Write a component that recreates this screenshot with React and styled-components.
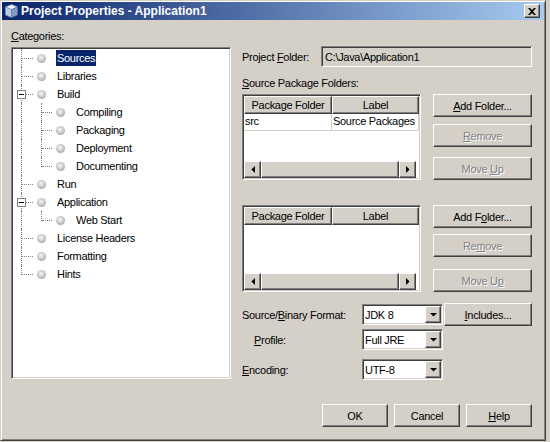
import React from 'react';
import styled, { createGlobalStyle, css } from 'styled-components';

const GlobalStyle = createGlobalStyle`
  html, body { margin: 0; padding: 0; background: #d4d0c8; }
  body {
    font-family: "Liberation Sans", Arial, sans-serif;
    font-size: 11px;
    letter-spacing: -0.3px;
    color: #000;
  }
  button { font-family: inherit; font-size: 11px; letter-spacing: inherit; }
`;

const raised = css`
  background: #d4d0c8;
  border: 1px solid;
  border-color: #fff #404040 #404040 #fff;
  box-shadow: inset -1px -1px #808080, inset 1px 1px #d4d0c8;
`;

const sunken = css`
  border: 1px solid;
  border-color: #808080 #fff #fff #808080;
  box-shadow: inset 1px 1px #404040, inset -1px -1px #d4d0c8;
  padding: 1px;
`;

const Dialog = styled.div`
  width: 546px;
  height: 441px;
  box-sizing: border-box;
  background: #d4d0c8;
  border: 1px solid;
  border-color: #d4d0c8 #404040 #404040 #d4d0c8;
  box-shadow: inset 1px 1px #fff, inset -1px -1px #808080;
  padding: 1px;
  display: flex;
  flex-direction: column;
`;

const Caption = styled.div`
  height: 18px;
  flex: none;
  display: flex;
  align-items: center;
  padding: 0 4px 0 3px;
  background: linear-gradient(to right, #0a246a, #a6caf0);
  color: #fff;
  font-weight: bold;
  font-size: 12px;
  letter-spacing: 0;
`;

const CaptionIcon = styled.svg`
  flex: none;
  margin-right: 3px;
`;

const CaptionTitle = styled.span`
  flex: 1;
  white-space: nowrap;
`;

const CloseButton = styled.span`
  ${raised};
  box-sizing: border-box;
  width: 16px;
  height: 14px;
  display: flex;
  align-items: center;
  justify-content: center;
`;

const Main = styled.div`
  display: grid;
  grid-template-columns: 220px 290px;
  column-gap: 11px;
  padding: 9px 0 0 9px;
`;

const LeftColumn = styled.div`
  display: flex;
  flex-direction: column;
`;

const RightColumn = styled.div`
  display: flex;
  flex-direction: column;
`;

const SectionLabel = styled.div`
  height: 14px;
  line-height: 14px;
  margin-top: ${p => p.$mt || 0}px;
  margin-bottom: 4px;
  white-space: nowrap;
`;

const Mn = styled.span`
  text-decoration: underline;
  text-underline-offset: 1px;
`;

const TreeBox = styled.div`
  ${sunken};
  box-sizing: border-box;
  height: 332px;
  background: #fff;
`;

const TreeRow = styled.div`
  display: flex;
  align-items: center;
  height: 18px;
`;

const Guide = styled.span`
  position: relative;
  flex: none;
  width: ${p => p.$w}px;
  height: 18px;
  &::before {
    content: '';
    display: ${p => (p.$v === 'none' ? 'none' : 'block')};
    position: absolute;
    left: 8px;
    top: 0;
    height: ${p => (p.$v === 'half' ? 10 : 18)}px;
    border-left: 1px dotted #808080;
  }
  &::after {
    content: '';
    display: ${p => (p.$h ? 'block' : 'none')};
    position: absolute;
    left: 9px;
    right: 0;
    top: 9px;
    border-top: 1px dotted #808080;
  }
`;

const Expander = styled.span`
  position: absolute;
  left: 4px;
  top: 5px;
  width: 9px;
  height: 9px;
  box-sizing: border-box;
  border: 1px solid #808080;
  background: #fff;
  z-index: 1;
  display: flex;
  align-items: center;
  justify-content: center;
  &::after {
    content: '';
    width: 5px;
    height: 1px;
    background: #000;
  }
`;

const BulletCell = styled.span`
  flex: none;
  width: 23px;
  display: flex;
  align-items: center;
`;

const Bullet = styled.span`
  width: 9px;
  height: 9px;
  margin-left: 4px;
  border-radius: 50%;
  background: radial-gradient(circle at 45% 40%, #f6f6f6 0, #d6d6d6 35%, #a8a8a8 75%, #8c8c8c 100%);
`;

const NodeLabel = styled.span`
  padding: 0 1px;
  line-height: 16px;
  white-space: nowrap;
  background: ${p => (p.$selected ? '#0a246a' : 'transparent')};
  color: ${p => (p.$selected ? '#fff' : '#000')};
`;

const FieldRow = styled.div`
  display: flex;
  align-items: center;
  height: ${p => p.$h || 21}px;
  margin-top: ${p => p.$mt || 0}px;
`;

const FieldLabel = styled.span`
  flex: none;
  box-sizing: border-box;
  width: ${p => p.$w}px;
  padding-left: ${p => p.$indent || 0}px;
  white-space: nowrap;
`;

const TextField = styled.div`
  ${sunken};
  flex: 1;
  box-sizing: border-box;
  height: 21px;
  padding: 1px 3px;
  background: #d4d0c8;
  display: flex;
  align-items: center;
  white-space: nowrap;
`;

const TableGroup = styled.div`
  display: flex;
  gap: 12px;
  height: ${p => p.$h}px;
  margin-top: ${p => p.$mt || 0}px;
`;

const TableFrame = styled.div`
  ${sunken};
  box-sizing: border-box;
  width: 179px;
  background: #fff;
  display: flex;
  flex-direction: column;
`;

const HeaderRow = styled.div`
  display: flex;
  flex: none;
`;

const HeaderCell = styled.div`
  ${raised};
  box-sizing: border-box;
  width: ${p => p.$w}px;
  height: 18px;
  display: flex;
  align-items: center;
  justify-content: center;
  white-space: nowrap;
`;

const BodyRow = styled.div`
  display: flex;
  flex: none;
  height: 16px;
  border-bottom: 1px solid #d4d0c8;
`;

const BodyCell = styled.div`
  box-sizing: border-box;
  width: ${p => p.$w}px;
  padding-left: 1px;
  line-height: 15px;
  border-right: 1px solid #d4d0c8;
  white-space: nowrap;
  overflow: hidden;
`;

const TableFill = styled.div`
  flex: 1;
`;

const HScroll = styled.div`
  display: flex;
  flex: none;
  height: 17px;
  width: calc(100% - 3px);
`;

const ScrollButton = styled.div`
  ${raised};
  box-sizing: border-box;
  width: 17px;
  height: 17px;
  flex: none;
  display: flex;
  align-items: center;
  justify-content: center;
`;

const ScrollThumb = styled.div`
  ${raised};
  flex: 1;
`;

const ButtonColumn = styled.div`
  display: flex;
  flex-direction: column;
  width: 99px;
`;

const Button = styled.button`
  ${raised};
  box-sizing: border-box;
  flex: none;
  width: ${p => p.$w || 99}px;
  height: 23px;
  padding: 0;
  margin: ${p => p.$m || 0};
  color: ${p => (p.disabled ? '#808080' : '#000')};
  text-shadow: ${p => (p.disabled ? '1px 1px 0 #fff' : 'none')};
  white-space: nowrap;
  cursor: default;
`;

const Combo = styled.div`
  ${sunken};
  box-sizing: border-box;
  width: 81px;
  height: 21px;
  background: #fff;
  display: flex;
  align-items: center;
`;

const ComboText = styled.span`
  flex: 1;
  padding-left: 1px;
  white-space: nowrap;
`;

const ComboArrow = styled.span`
  ${raised};
  box-sizing: border-box;
  width: 16px;
  height: 17px;
  display: flex;
  align-items: center;
  justify-content: center;
`;

const Footer = styled.div`
  display: flex;
  justify-content: flex-end;
  gap: 6px;
  margin-top: 24px;
  padding-right: 12px;
`;

const DownTri = () => (
  <svg width="7" height="4" viewBox="0 0 7 4"><polygon points="0,0 7,0 3.5,3.6" fill="#000" /></svg>
);
const LeftTri = () => (
  <svg width="4" height="7" viewBox="0 0 4 7"><polygon points="4,0 4,7 0.4,3.5" fill="#000" /></svg>
);
const RightTri = () => (
  <svg width="4" height="7" viewBox="0 0 4 7"><polygon points="0,0 0,7 3.6,3.5" fill="#000" /></svg>
);

const CubeIcon = () => (
  <CaptionIcon width="13" height="14" viewBox="0 0 13 14">
    <polygon points="6.5,0.5 12.5,3 6.5,5.5 0.5,3" fill="#eef4fb" stroke="#7d95b5" strokeWidth="0.6" />
    <polygon points="0.5,3 6.5,5.5 6.5,13.5 0.5,11" fill="#b9cde3" stroke="#7d95b5" strokeWidth="0.6" />
    <polygon points="6.5,5.5 12.5,3 12.5,11 6.5,13.5" fill="#7f9cc2" stroke="#5f7ca4" strokeWidth="0.6" />
  </CaptionIcon>
);

const CloseGlyph = () => (
  <svg width="8" height="7" viewBox="0 0 8 7">
    <path d="M0 0h2l2 2 2-2h2L5 3.5 8 7H6L4 5 2 7H0l3-3.5z" fill="#000" />
  </svg>
);

const tree = [
  { label: 'Sources', level: 0, selected: true },
  { label: 'Libraries', level: 0 },
  { label: 'Build', level: 0, expanded: true },
  { label: 'Compiling', level: 1 },
  { label: 'Packaging', level: 1 },
  { label: 'Deployment', level: 1 },
  { label: 'Documenting', level: 1, last: true },
  { label: 'Run', level: 0 },
  { label: 'Application', level: 0, expanded: true },
  { label: 'Web Start', level: 1, last: true },
  { label: 'License Headers', level: 0 },
  { label: 'Formatting', level: 0 },
  { label: 'Hints', level: 0, last: true },
];

const TreeNode = ({ node }) => (
  <TreeRow>
    {node.level === 0 ? (
      <Guide $w={20} $v={node.last ? 'half' : 'full'} $h>
        {node.expanded && <Expander />}
      </Guide>
    ) : (
      <>
        <Guide $w={20} $v="full" />
        <Guide $w={19} $v={node.last ? 'half' : 'full'} $h />
      </>
    )}
    <BulletCell><Bullet /></BulletCell>
    <NodeLabel $selected={node.selected}>{node.label}</NodeLabel>
  </TreeRow>
);

const Scrollbar = () => (
  <HScroll>
    <ScrollButton><LeftTri /></ScrollButton>
    <ScrollThumb />
    <ScrollButton><RightTri /></ScrollButton>
  </HScroll>
);

const FolderTable = ({ rows }) => (
  <TableFrame>
    <HeaderRow>
      <HeaderCell $w={88}>Package Folder</HeaderCell>
      <HeaderCell $w={87}>Label</HeaderCell>
    </HeaderRow>
    {rows.map(r => (
      <BodyRow key={r.folder}>
        <BodyCell $w={88}>{r.folder}</BodyCell>
        <BodyCell $w={87}>{r.label}</BodyCell>
      </BodyRow>
    ))}
    <TableFill />
    <Scrollbar />
  </TableFrame>
);

const ComboBox = ({ value }) => (
  <Combo>
    <ComboText>{value}</ComboText>
    <ComboArrow><DownTri /></ComboArrow>
  </Combo>
);

export default function App() {
  return (
    <>
      <GlobalStyle />
      <Dialog>
        <Caption>
          <CubeIcon />
          <CaptionTitle>Project Properties - Application1</CaptionTitle>
          <CloseButton><CloseGlyph /></CloseButton>
        </Caption>
        <Main>
          <LeftColumn>
            <SectionLabel><Mn>C</Mn>ategories:</SectionLabel>
            <TreeBox>
              {tree.map(n => <TreeNode key={n.label} node={n} />)}
            </TreeBox>
          </LeftColumn>
          <RightColumn>
            <FieldRow $mt={17}>
              <FieldLabel $w={79}>Project <Mn>F</Mn>older:</FieldLabel>
              <TextField>C:\Java\Application1</TextField>
            </FieldRow>
            <SectionLabel $mt={9}><Mn>S</Mn>ource Package Folders:</SectionLabel>
            <TableGroup $h={86}>
              <FolderTable rows={[{ folder: 'src', label: 'Source Packages' }]} />
              <ButtonColumn>
                <Button><Mn>A</Mn>dd Folder...</Button>
                <Button disabled $m="7px 0 0 0"><Mn>R</Mn>emove</Button>
                <Button disabled $m="auto 0 0 0">Move <Mn>U</Mn>p</Button>
              </ButtonColumn>
            </TableGroup>
            <TableGroup $h={87} $mt={25}>
              <FolderTable rows={[]} />
              <ButtonColumn>
                <Button>Add F<Mn>o</Mn>lder...</Button>
                <Button disabled $m="6px 0 0 0">Re<Mn>m</Mn>ove</Button>
                <Button disabled $m="auto 0 0 0">Move U<Mn>p</Mn></Button>
              </ButtonColumn>
            </TableGroup>
            <FieldRow $mt={11} $h={23}>
              <FieldLabel $w={120}>Source/<Mn>B</Mn>inary Format:</FieldLabel>
              <ComboBox value="JDK 8" />
              <Button $w={88} $m="0 0 0 1px"><Mn>I</Mn>ncludes...</Button>
            </FieldRow>
            <FieldRow $mt={3}>
              <FieldLabel $w={120} $indent={12}><Mn>P</Mn>rofile:</FieldLabel>
              <ComboBox value="Full JRE" />
            </FieldRow>
            <FieldRow $mt={9}>
              <FieldLabel $w={120}><Mn>E</Mn>ncoding:</FieldLabel>
              <ComboBox value="UTF-8" />
            </FieldRow>
          </RightColumn>
        </Main>
        <Footer>
          <Button $w={66}>OK</Button>
          <Button $w={66}>Cancel</Button>
          <Button $w={66}><Mn>H</Mn>elp</Button>
        </Footer>
      </Dialog>
    </>
  );
}
